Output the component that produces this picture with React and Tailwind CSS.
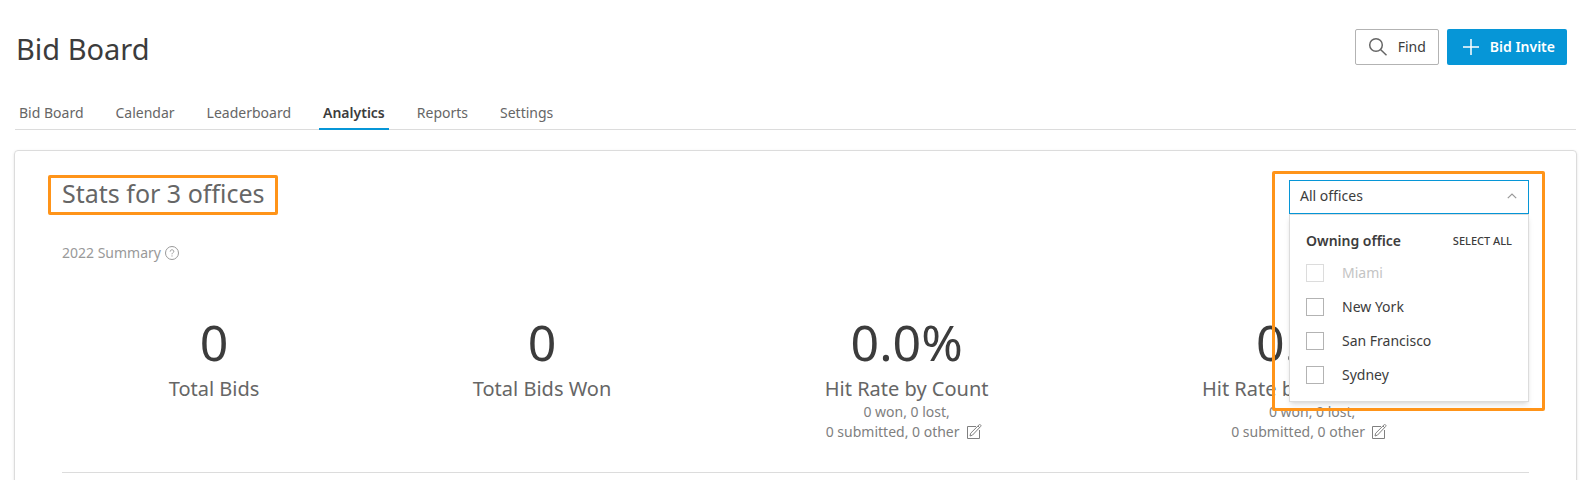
import React, { useState } from 'react';

const TABS = ['Bid Board', 'Calendar', 'Leaderboard', 'Analytics', 'Reports', 'Settings'];

const OFFICES = [
  { id: 'miami', name: 'Miami', disabled: true },
  { id: 'new-york', name: 'New York' },
  { id: 'san-francisco', name: 'San Francisco' },
  { id: 'sydney', name: 'Sydney' },
];

const STATS = [
  { label: 'Total Bids', value: '0' },
  { label: 'Total Bids Won', value: '0' },
  { label: 'Hit Rate by Count', value: '0.0%', detail: true },
  { label: 'Hit Rate by Dollar Value', value: '0.0%', detail: true },
];

function SearchIcon() {
  return (
    <svg width="20" height="20" viewBox="0 0 20 20" fill="none" stroke="#666" strokeWidth="1.5" aria-hidden="true">
      <circle cx="8" cy="8" r="6.3" />
      <path d="M12.5 12.5 18.5 18.2" />
    </svg>
  );
}

function PlusIcon() {
  return (
    <svg width="18" height="18" viewBox="0 0 18 18" fill="none" stroke="#fff" strokeWidth="1.5" aria-hidden="true">
      <path d="M9 1v16M1 9h16" />
    </svg>
  );
}

function HelpIcon() {
  return (
    <svg width="14" height="14" viewBox="0 0 14 14" fill="none" stroke="#999" aria-hidden="true">
      <circle cx="7" cy="7" r="6.5" />
      <path d="M5.2 5.6C5.2 4.4 6 3.8 7 3.8s1.8.6 1.8 1.6C8.8 6.7 7 6.7 7 8.3M7 9.4v1.1" />
    </svg>
  );
}

function EditIcon() {
  return (
    <svg width="16" height="16" viewBox="0 0 16 16" fill="none" stroke="#808080" aria-hidden="true">
      <path d="M10 2.500H1.500v12h12V6" />
      <path d="M4 12l.7-2.800L13 .9c.5-.5 1.100-.4 1.600 0s.5 1.100 0 1.600L6.500 11.100z" />
      <path d="M12 2l1.800 1.800" />
    </svg>
  );
}

function Tabs() {
  return (
    <nav className="mt-6 ml-[15px] mr-[11px] flex gap-6 border-b border-[#dcdcdc]">
      {TABS.map((tab) => (
        <a
          key={tab}
          href="#"
          aria-current={tab === 'Analytics' ? 'page' : undefined}
          className={
            tab === 'Analytics'
              ? '-mb-px h-[37px] border-b-2 border-[#0696d7] px-1 pt-[10px] font-semibold text-[#3c3c3c]'
              : 'h-9 px-1 pt-[10px] text-[#666]'
          }
        >
          {tab}
        </a>
      ))}
    </nav>
  );
}

function OfficeFilter() {
  const [selected, setSelected] = useState([]);

  const toggle = (id) => {
    setSelected((prev) => (prev.includes(id) ? prev.filter((x) => x !== id) : [...prev, id]));
  };

  const selectAll = () => {
    setSelected(OFFICES.filter((office) => !office.disabled).map((office) => office.id));
  };

  return (
    <div className="relative w-60">
      <button
        type="button"
        aria-expanded="true"
        aria-controls="office-panel"
        className="flex h-[34px] w-full items-center justify-between border border-[#0696d7] bg-white pb-[2px] pl-[10px] pr-[11px] text-[#3c3c3c]"
      >
        All offices
        <svg width="10" height="6" viewBox="0 0 10 6" fill="none" stroke="#999" strokeWidth="1.2" aria-hidden="true">
          <path d="M.8 5.200 5 1l4.200 4.200" />
        </svg>
      </button>
      <div
        id="office-panel"
        className="absolute top-full left-0 z-10 w-full border border-[#dcdcdc] bg-white px-4 pt-4 pb-[17px] shadow-md"
      >
        <div className="flex h-5 items-center justify-between text-[#3c3c3c]">
          <span className="font-semibold">Owning office</span>
          <button type="button" onClick={selectAll} className="text-[11px] font-medium">
            SELECT ALL
          </button>
        </div>
        <div className="mt-[13px] flex flex-col gap-4">
          {OFFICES.map((office) => (
            <label
              key={office.id}
              className={office.disabled ? 'flex h-[18px] items-center gap-[18px] text-[#c4c4c4]' : 'flex h-[18px] items-center gap-[18px] text-[#3c3c3c]'}
            >
              <input
                type="checkbox"
                disabled={office.disabled}
                checked={selected.includes(office.id)}
                onChange={() => toggle(office.id)}
                className="size-[18px] appearance-none border border-[#b3b3b3] bg-white checked:bg-[#0696d7] disabled:border-[#dcdcdc]"
              />
              {office.name}
            </label>
          ))}
        </div>
      </div>
      {/* highlight frame */}
      <div className="pointer-events-none absolute -top-[9px] -left-[17px] z-20 h-[240px] w-[273px] rounded-xs border-3 border-[#ff9419]" />
    </div>
  );
}

function Stat({ stat }) {
  return (
    <div className="flex flex-auto flex-col items-center">
      <div className="text-[50px] leading-[60px] text-[#3c3c3c]">{stat.value}</div>
      <div className="mt-1 text-xl leading-[26px] text-[#666]">{stat.label}</div>
      {stat.detail && (
        <div className="text-center leading-5 text-[#808080]">
          <p>0 won, 0 lost,</p>
          <p className="flex items-center">
            0 submitted, 0 other
            <button type="button" aria-label={`Edit ${stat.label}`} className="mx-[6px]">
              <EditIcon />
            </button>
          </p>
        </div>
      )}
    </div>
  );
}

export default function App() {
  return (
    <div className="overflow-hidden bg-white font-['Noto_Sans',sans-serif] text-sm">
      <header className="flex items-start justify-between pt-[29px] pr-5 pl-4">
        <h1 className="text-[29px] leading-10 text-[#3c3c3c]">Bid Board</h1>
        <div className="flex gap-2">
          <button
            type="button"
            className="flex h-9 items-center gap-[10px] rounded-xs border border-[#b3b3b3] bg-white px-3 text-[#3c3c3c]"
          >
            <SearchIcon />
            Find
          </button>
          <button
            type="button"
            className="flex h-9 items-center gap-[10px] rounded-xs bg-[#0696d7] pr-3 pl-[15px] font-semibold text-white"
          >
            <PlusIcon />
            Bid Invite
          </button>
        </div>
      </header>

      <Tabs />

      <main className="mt-5 mr-[10px] ml-[14px] h-[340px] rounded border border-[#dcdcdc] px-[47px] pt-[29px] shadow-sm">
        <div className="flex h-[87px] items-start justify-between">
          <div>
            <h2 className="relative text-[25px] leading-[26px] text-[#666]">
              Stats for 3 offices
              {/* highlight frame */}
              <span className="pointer-events-none absolute -inset-x-[14px] -top-[5px] h-10 rounded-xs border-3 border-[#ff9419]" />
            </h2>
            <p className="mt-[37px] flex items-center gap-1 text-[#999]">
              2022 Summary
              <HelpIcon />
            </p>
          </div>
          <OfficeFilter />
        </div>
        <section className="mt-[45px] flex h-[161px] border-b border-[#dcdcdc]">
          {STATS.map((stat) => (
            <Stat key={stat.label} stat={stat} />
          ))}
        </section>
      </main>
    </div>
  );
}
